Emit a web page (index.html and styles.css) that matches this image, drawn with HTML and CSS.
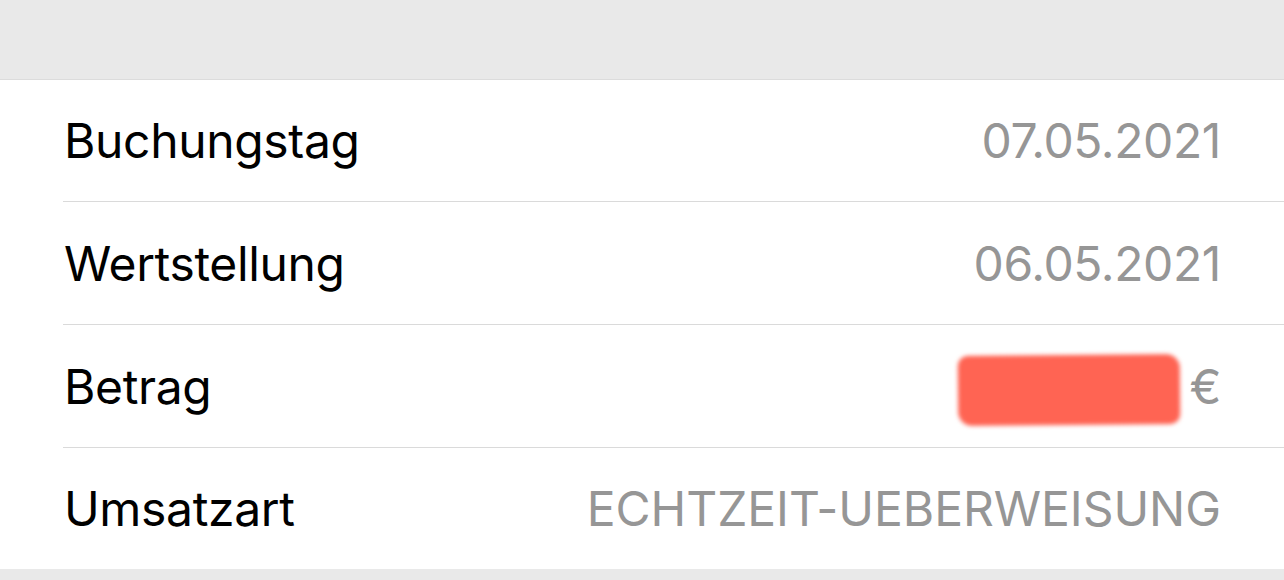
FILE: index.html
```html
<!DOCTYPE html>
<html lang="de">
<head>
<meta charset="utf-8">
<link rel="stylesheet" href="styles.css">
</head>
<body>
<div class="top"></div>
<div class="list">
  <div class="row">
    <span class="label">Buchungstag</span>
    <span class="value">07.05.2021</span>
  </div>
  <div class="row">
    <span class="label">Wertstellung</span>
    <span class="value">06.05.2021</span>
  </div>
  <div class="row">
    <span class="label">Betrag</span>
    <span class="value amount"><span class="redact"></span><span class="euro">€</span></span>
  </div>
  <div class="row last">
    <span class="label">Umsatzart</span>
    <span class="value">ECHTZEIT-UEBERWEISUNG</span>
  </div>
</div>
<div class="bottom"></div>
</body>
</html>
```

FILE: styles.css
```css
html, body {
  margin: 0;
  padding: 0;
  background: #e9e9e9;
  width: 1284px;
  height: 580px;
  overflow: hidden;
  font-family: Inter, "Noto Sans", sans-serif;
}
.top {
  height: 80px;
  background: #e9e9e9;
  border-bottom: 1px solid #dcdcdc;
  box-sizing: border-box;
}
.list {
  padding-left: 63px;
  background: #fff;
}
.row {
  height: 123px;
  box-sizing: border-box;
  border-bottom: 1px solid #dadada;
  display: flex;
  align-items: center;
  justify-content: space-between;
  padding-right: 63px;
}
.row:first-child {
  height: 122px;
}
.row.last {
  border-bottom: none;
  height: 121px;
}
.label {
  font-size: 48px;
  color: #000;
  letter-spacing: -0.35px;
  padding-left: 1px;
}
.value {
  font-size: 48px;
  color: #969696;
  letter-spacing: -0.4px;
}
.row.last .value {
  letter-spacing: -0.05px;
}
.amount {
  display: flex;
  align-items: center;
  gap: 9px;
}
.redact {
  display: block;
  width: 222px;
  height: 70px;
  background: #ff6453;
  border-radius: 10px 14px 10px 14px;
  filter: blur(2px);
  transform: rotate(-0.5deg);
  margin-top: 8px;
}
.euro {
  display: block;
}
.bottom {
  height: 11px;
  background: #e9e9e9;
}
```
